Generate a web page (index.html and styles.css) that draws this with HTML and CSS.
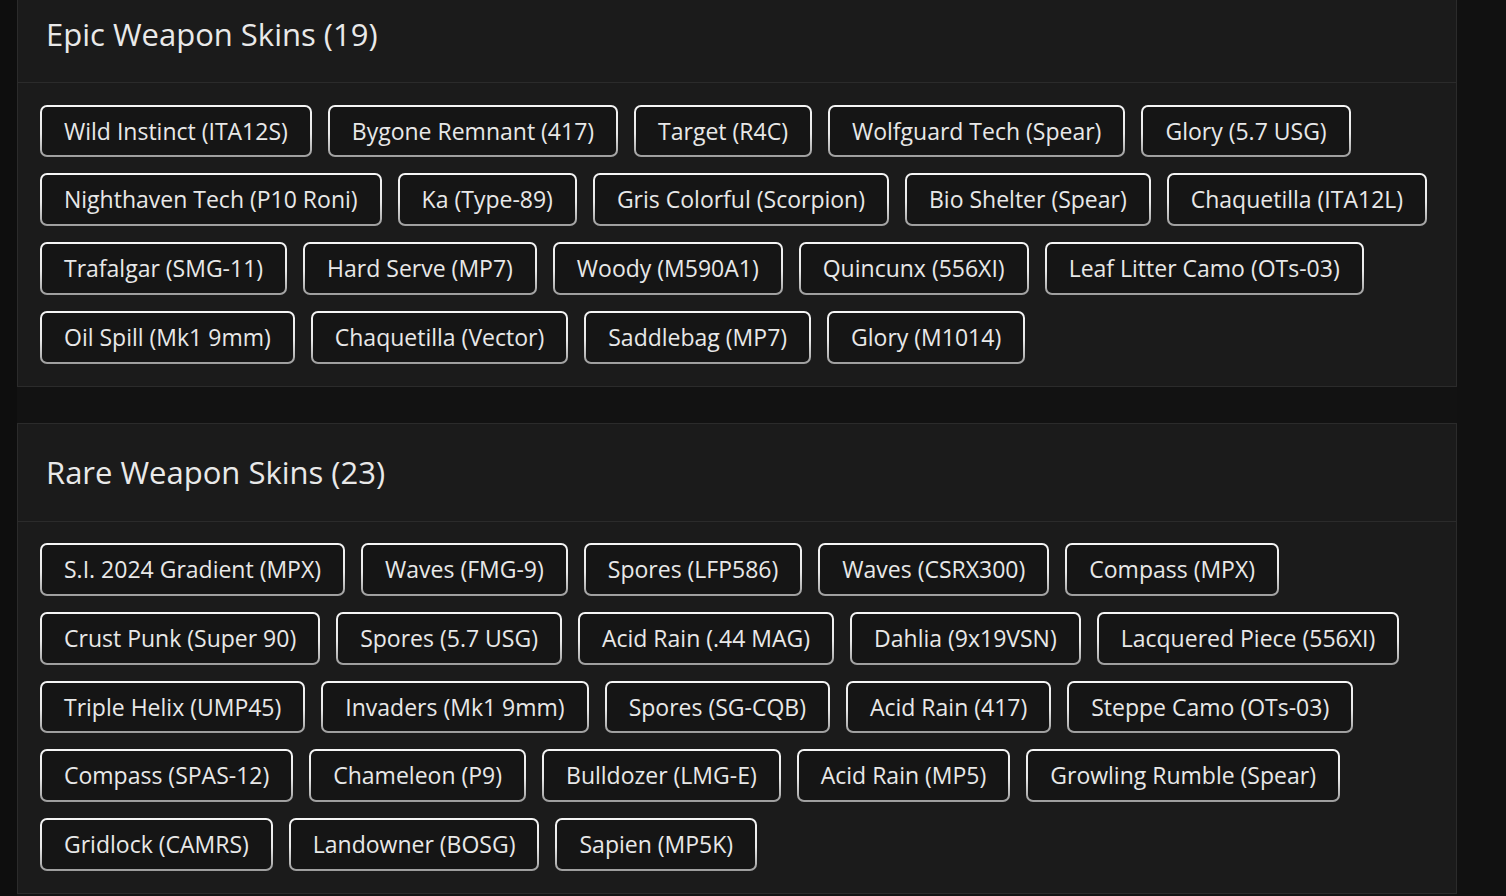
FILE: index.html
```html
<!DOCTYPE html>
<html lang="en">
<head>
<meta charset="utf-8">
<title>Weapon Skins</title>
<link rel="stylesheet" href="styles.css">
</head>
<body>
<div class="layout">
  <div class="gutter"></div>
  <main class="content">
    <section class="card">
      <header class="card-header"><h2>Epic Weapon Skins (19)</h2></header>
      <ul class="chips">
        <li class="chip">Wild Instinct (ITA12S)</li>
        <li class="chip">Bygone Remnant (417)</li>
        <li class="chip">Target (R4C)</li>
        <li class="chip">Wolfguard Tech (Spear)</li>
        <li class="chip">Glory (5.7 USG)</li>
        <li class="chip">Nighthaven Tech (P10 Roni)</li>
        <li class="chip">Ka (Type-89)</li>
        <li class="chip">Gris Colorful (Scorpion)</li>
        <li class="chip">Bio Shelter (Spear)</li>
        <li class="chip">Chaquetilla (ITA12L)</li>
        <li class="chip">Trafalgar (SMG-11)</li>
        <li class="chip">Hard Serve (MP7)</li>
        <li class="chip">Woody (M590A1)</li>
        <li class="chip">Quincunx (556XI)</li>
        <li class="chip">Leaf Litter Camo (OTs-03)</li>
        <li class="chip">Oil Spill (Mk1 9mm)</li>
        <li class="chip">Chaquetilla (Vector)</li>
        <li class="chip">Saddlebag (MP7)</li>
        <li class="chip">Glory (M1014)</li>
      </ul>
    </section>
    <section class="card">
      <header class="card-header"><h2>Rare Weapon Skins (23)</h2></header>
      <ul class="chips">
        <li class="chip">S.I. 2024 Gradient (MPX)</li>
        <li class="chip">Waves (FMG-9)</li>
        <li class="chip">Spores (LFP586)</li>
        <li class="chip">Waves (CSRX300)</li>
        <li class="chip">Compass (MPX)</li>
        <li class="chip">Crust Punk (Super 90)</li>
        <li class="chip">Spores (5.7 USG)</li>
        <li class="chip">Acid Rain (.44 MAG)</li>
        <li class="chip">Dahlia (9x19VSN)</li>
        <li class="chip">Lacquered Piece (556XI)</li>
        <li class="chip">Triple Helix (UMP45)</li>
        <li class="chip">Invaders (Mk1 9mm)</li>
        <li class="chip">Spores (SG-CQB)</li>
        <li class="chip">Acid Rain (417)</li>
        <li class="chip">Steppe Camo (OTs-03)</li>
        <li class="chip">Compass (SPAS-12)</li>
        <li class="chip">Chameleon (P9)</li>
        <li class="chip">Bulldozer (LMG-E)</li>
        <li class="chip">Acid Rain (MP5)</li>
        <li class="chip">Growling Rumble (Spear)</li>
        <li class="chip">Gridlock (CAMRS)</li>
        <li class="chip">Landowner (BOSG)</li>
        <li class="chip">Sapien (MP5K)</li>
      </ul>
    </section>
  </main>
  <div class="side"></div>
</div>
</body>
</html>
```
FILE: styles.css
```css
* { box-sizing: border-box; }
html, body {
  margin: 0;
  padding: 0;
  background: #0e0e0e;
  height: 100%;
  overflow: hidden;
}
body {
  font-family: "Open Sans", "Noto Sans", sans-serif;
  color: #e6e6e6;
}
.layout {
  display: flex;
  min-height: 100%;
}
.gutter {
  width: 17px;
  flex: none;
  background: #0e0e0e;
}
.content {
  width: 1440px;
  flex: none;
  background: #121212;
  margin-top: -16px;
  display: flex;
  flex-direction: column;
  gap: 36px;
}
.side {
  flex: 1;
  background: #111111;
}
.card {
  background: #1b1b1b;
  border: 1px solid #2b2b2b;
}
.card-header {
  height: 98px;
  border-bottom: 1px solid #2b2b2b;
  display: flex;
  align-items: center;
  padding: 0 28px;
}
.card-header h2 {
  margin: 0;
  font-size: 31px;
  font-weight: 500;
  color: #e9e9e9;
}
.chips {
  list-style: none;
  margin: 0;
  padding: 21.5px 22px 22px;
  display: flex;
  flex-wrap: wrap;
  gap: 16px;
}
.chip {
  font-size: 23px;
  line-height: 30.75px;
  padding: 9px 22px;
  border-radius: 7px;
  border: 2px solid transparent;
  background:
    linear-gradient(#151515, #151515) padding-box,
    linear-gradient(to bottom, #f6f6f6 0%, #e8e8e8 55%, #9c9c9c 100%) border-box;
  color: #e8e8e8;
  white-space: nowrap;
}
```
